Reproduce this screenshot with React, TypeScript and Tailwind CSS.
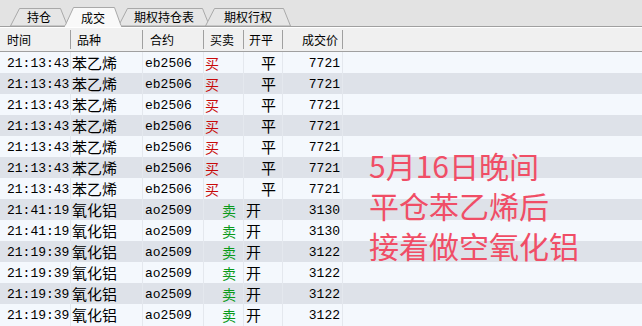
import React from 'react'

const cjk = '"Noto Sans CJK SC", "Noto Sans", sans-serif'
const mono = '"Liberation Mono", "DejaVu Sans Mono", monospace'

type Row = { time: string; name: string; code: string; side: '买' | '卖'; oc: '开' | '平'; price: string }

const buy: Row = { time: '21:13:43', name: '苯乙烯', code: 'eb2506', side: '买', oc: '平', price: '7721' }
const sellA: Row = { time: '21:41:19', name: '氧化铝', code: 'ao2509', side: '卖', oc: '开', price: '3130' }
const sellB: Row = { time: '21:19:39', name: '氧化铝', code: 'ao2509', side: '卖', oc: '开', price: '3122' }

const rows: Row[] = [buy, buy, buy, buy, buy, buy, buy, sellA, sellA, sellB, sellB, sellB, sellB]

const tabs = [
  { label: '持仓', w: 58, ml: 'ml-[10px]', active: false },
  { label: '成交', w: 58, ml: '-ml-[4px]', active: true },
  { label: '期权持仓表', w: 92, ml: '-ml-[4px]', active: false },
  { label: '期权行权', w: 86, ml: '-ml-[5px]', active: false },
]

const cols = 'grid grid-cols-[71px_72px_61px_40px_39px_60px_1fr]'

function Tab({ label, w, ml, active }: { label: string; w: number; ml: string; active: boolean }) {
  const h = active ? 20 : 18
  return (
    <div
      className={`relative flex items-center justify-center ${ml} ${active ? 'z-10 h-[20px] -mb-[1px]' : 'h-[18px]'}`}
      style={{ width: w }}
    >
      <svg className="absolute inset-0" width={w} height={h} viewBox={`0 0 ${w} ${h}`}>
        <polygon
          points={`0.5,${h} 9.5,0.5 ${w - 7.5},0.5 ${w - 0.5},${h}`}
          fill={active ? '#f9f9f9' : '#e6e6e6'}
          stroke="#a9a9a9"
          strokeWidth="1"
        />
        {active && <line x1="1" y1={h - 0.5} x2={w - 1} y2={h - 0.5} stroke="#f9f9f9" strokeWidth="2" />}
      </svg>
      <span className={`relative text-[12px] text-black leading-none ${active ? 'pt-[1px]' : ''}`} style={{ fontFamily: cjk }}>
        {label}
      </span>
    </div>
  )
}

export default function App() {
  return (
    <div className="relative w-[642px] h-[326px] overflow-hidden bg-[#f4f8fd]">
      {/* tab bar */}
      <div className="flex items-end h-[27px] bg-[#e3e3e3] border-b border-[#a0a0a0]">
        {tabs.map(t => (
          <Tab key={t.label} {...t} />
        ))}
      </div>

      {/* header */}
      <div
        className={`${cols} h-[25px] bg-[#f0f0f0] border-t border-white border-b border-b-[#a0a0a0] text-[12px] text-black`}
        style={{ fontFamily: cjk }}
      >
        <div className="flex items-center pl-[7px] border-r border-[#a0a0a0] my-[2px]">时间</div>
        <div className="flex items-center pl-[6px] border-r border-[#a0a0a0] my-[2px]">品种</div>
        <div className="flex items-center pl-[7px] border-r border-[#a0a0a0] my-[2px]">合约</div>
        <div className="flex items-center pl-[6px] border-r border-[#a0a0a0] my-[2px]">买卖</div>
        <div className="flex items-center pl-[5px] border-r border-[#a0a0a0] my-[2px]">开平</div>
        <div className="flex items-center justify-end pr-[4px] border-r border-[#a0a0a0] my-[2px]">成交价</div>
        <div />
      </div>

      {/* rows */}
      <div>
        {rows.map((r, i) => (
          <div key={i} className={`${cols} h-[21px] ${i % 2 === 1 ? 'bg-[#dee2e9]' : 'bg-[#f4f8fd]'} text-black`}>
            <div className="flex items-center pl-[7px] text-[13px] border-r border-[#e4e8ee]" style={{ fontFamily: mono }}>
              {r.time}
            </div>
            <div className="flex items-center pl-[1px] text-[15px] border-r border-[#e4e8ee]" style={{ fontFamily: cjk }}>
              {r.name}
            </div>
            <div className="flex items-center pl-[2px] text-[13px] border-r border-[#e4e8ee]" style={{ fontFamily: mono }}>
              {r.code}
            </div>
            <div
              className={`flex items-center text-[14px] border-r border-[#e4e8ee] ${
                r.side === '买' ? 'pl-[1px] text-[#c80a0a]' : 'pl-[18px] text-[#0a9a1a]'
              }`}
              style={{ fontFamily: cjk }}
            >
              {r.side}
            </div>
            <div
              className={`flex items-center text-[15px] border-r border-[#e4e8ee] ${r.oc === '平' ? 'pl-[17px]' : 'pl-[2px]'}`}
              style={{ fontFamily: cjk }}
            >
              {r.oc}
            </div>
            <div
              className="flex items-center justify-end pr-[2px] text-[13px] border-r border-[#e4e8ee]"
              style={{ fontFamily: mono }}
            >
              {r.price}
            </div>
            <div />
          </div>
        ))}
      </div>

      {/* annotation over the table */}
      <div
        className="absolute left-[369px] top-[145px] text-[30px] leading-[40px] text-[#f04e66]"
        style={{ fontFamily: cjk }}
      >
        <div>5月16日晚间</div>
        <div>平仓苯乙烯后</div>
        <div>接着做空氧化铝</div>
      </div>
    </div>
  )
}
